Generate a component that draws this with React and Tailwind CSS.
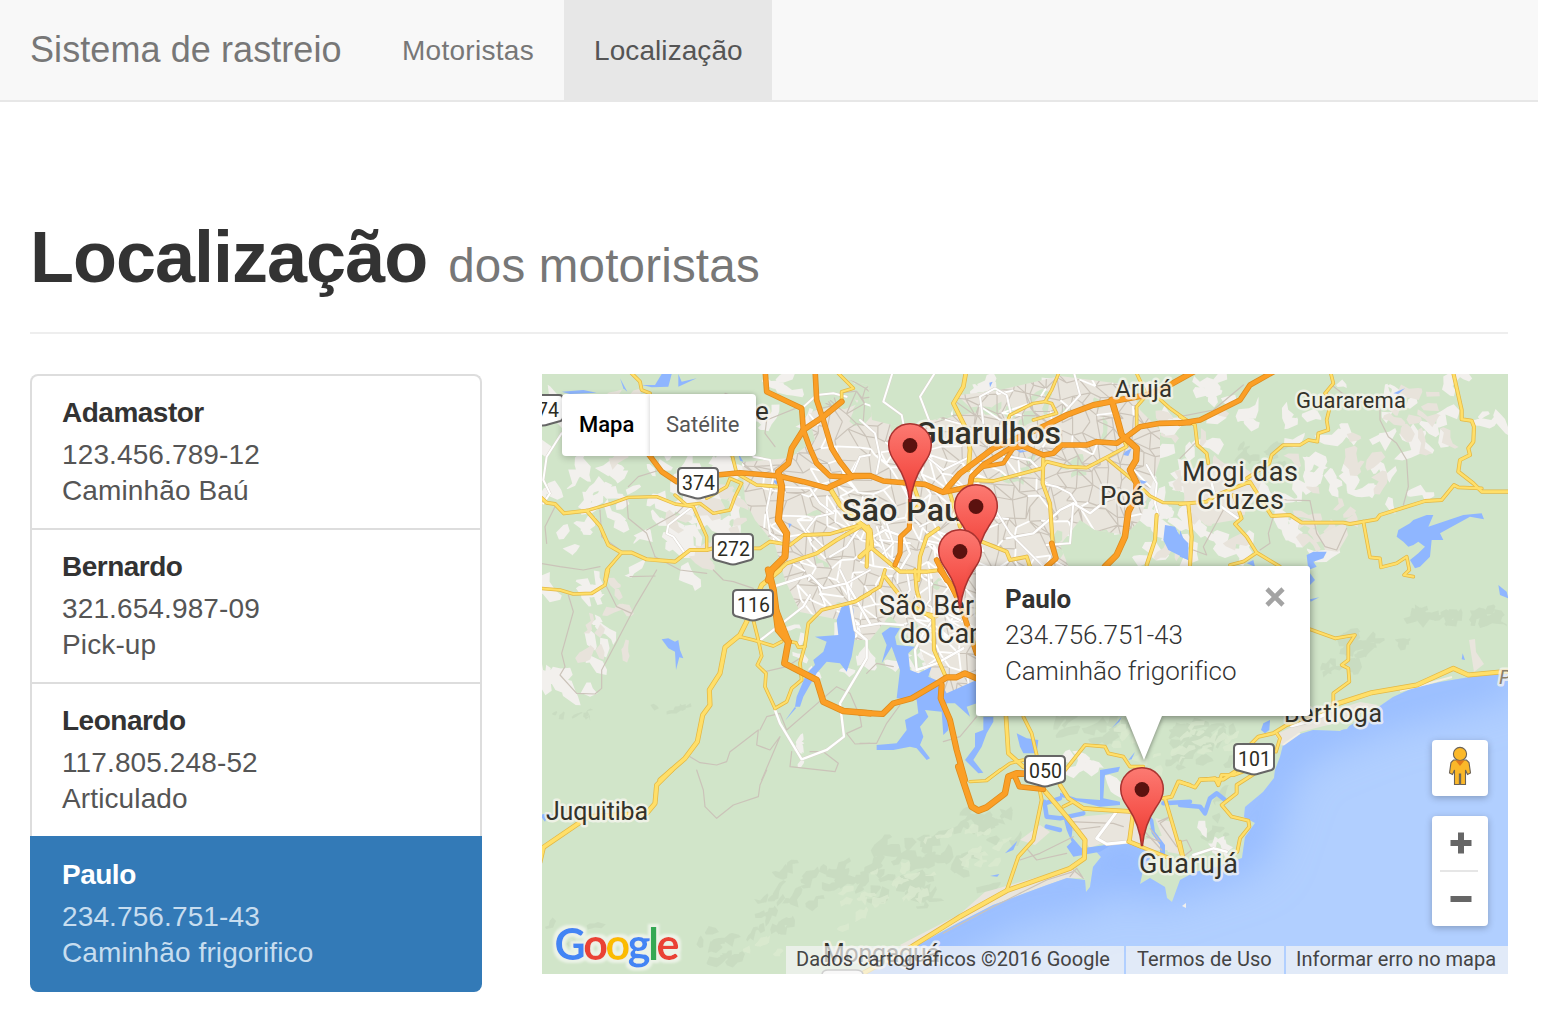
import React from "react";

const drivers = [
  { name: "Adamastor", doc: "123.456.789-12", vehicle: "Caminhão Baú" },
  { name: "Bernardo", doc: "321.654.987-09", vehicle: "Pick-up" },
  { name: "Leonardo", doc: "117.805.248-52", vehicle: "Articulado" },
  { name: "Paulo", doc: "234.756.751-43", vehicle: "Caminhão frigorifico", active: true },
];

/* Map data: each sector has its own origin and is drawn at one third scale. */
const origin = {
  nw: [540, 370], n: [860, 370], ne: [1180, 370],
  w: [540, 570], c: [860, 570], e: [1180, 570],
  sw: [540, 770], s: [860, 770], se: [1180, 770],
};

const orange = [
  ["nw", 4, "675,-5 680,65 785,115 790,180 810,235 830,280 870,318 935,322"],
  ["nw", 4, "825,-5 830,90 850,150 875,235 900,275 935,320 990,318"],
  ["nw", 4.5, "905,95 850,140 790,180 755,235 745,280 715,305"],
  ["nw", 4, "320,245 365,305 410,335"],
  ["nw", 4, "530,315 600,308 715,318 790,335 865,355"],
  ["nw", 4.5, "870,350 935,320"],
  ["nw", 5.5, "715,310 725,350 715,450 740,490 735,560 695,600 685,630"],
  ["n", 4, "-20,317 30,317 70,333 150,340 195,343 250,367 330,350"],
  ["n", 4.5, "255,362 300,310 400,235 470,205 560,165 620,135 700,105 790,88 860,75 920,50 1010,0"],
  ["n", 4, "330,350 335,320 370,285 450,235 480,230"],
  ["n", 3, "355,300 370,290 430,280 460,235"],
  ["n", 4, "480,225 550,255 580,250 605,225 680,225 710,215 770,220 800,200 840,170 900,160 990,158"],
  ["n", 5, "755,90 770,140 785,195 830,235 828,270 810,300 830,340 828,380 805,425 795,500 770,555 735,590"],
  ["n", 3.5, "150,430 148,475 122,500 120,550 105,585"],
  ["n", 4, "575,520 588,565 560,590"],
  ["n", 4, "230,570 260,630"],
  ["ne", 4, "0,160 60,150 180,90 210,45 290,0"],
  ["w", 5.5, "685,0 700,60 715,180 745,215"],
  ["w", 5, "700,100 745,215 733,280 830,330 850,395 910,423 990,430"],
  ["c", 4.5, "0,428 68,432 100,400 155,385 240,335 260,322 290,322 315,310 350,325"],
  ["c", 4.5, "245,345 242,385 270,450 290,540 315,630"],
  ["c", 4, "240,0 270,40 300,100 350,250"],
  ["s", 5, "295,-10 335,110 355,122 380,112 435,70 445,20 470,10 515,12"],
  ["s", 4, "465,20 478,50 550,58"],
];

const yellow = [
  ["nw", 3, "0,380 20,398 45,402 72,430 140,422 180,468 205,525 245,548 275,548 320,568 405,575 450,540 500,540 520,535"],
  ["nw", 2.3, "140,422 215,400 265,382 350,380 405,402 460,410 500,500 500,540"],
  ["nw", 2.7, "640,535 660,535 690,515 750,525 790,495 870,492 960,465"],
  ["nw", 2.7, "265,0 300,35 305,60 330,70"],
  ["nw", 2.3, "405,375 440,405 480,400 520,430 570,420 585,380 605,340 570,325 560,350 500,385"],
  ["nw", 2.5, "575,250 590,310 650,345 715,350"],
  ["nw", 4, "870,355 900,405 960,460 990,490"],
  ["nw", 3, "960,470 890,510 830,550 740,580 700,615"],
  ["nw", 2.5, "245,548 200,600 195,630"],
  ["nw", 2.5, "885,0 940,55 905,65 905,95"],
  ["nw", 3, "985,470 980,590"],
  ["n", 3.5, "320,-5 310,50 280,100 320,180 330,240 325,300"],
  ["n", 2.3, "600,0 575,60 555,95 575,100 590,130 555,140 520,150"],
  ["n", 2.3, "555,95 520,100 450,135 440,160"],
  ["n", 2.7, "330,330 400,333 470,315 545,295 560,275 620,290 680,293 740,262 800,230 785,195"],
  ["n", 3, "550,265 548,340 570,400 578,520"],
  ["n", 2.3, "740,265 830,340 870,378 910,398 990,400"],
  ["n", 3, "890,435 885,510 860,585"],
  ["n", 3, "365,515 440,545 450,570 500,560 510,590"],
  ["n", 2.5, "830,170 830,110 860,75 830,10"],
  ["n", 2.5, "880,70 930,115 990,158"],
  ["n", 3, "160,345 180,400 165,420"],
  ["n", 4, "0,460 30,480 35,530 0,560"],
  ["n", 3, "235,475 200,500 180,560 175,630"],
  ["n", 3, "30,530 90,580 120,605 200,605 240,600"],
  ["n", 3, "270,370 300,470"],
  ["ne", 2.6, "450,0 460,40 435,70 455,90 440,150 445,180 415,190 412,215 385,210 360,225 310,225 275,255 268,280 200,325"],
  ["ne", 3, "818,0 845,120 845,148 875,152 882,170 880,215 865,235 870,255 840,270 835,305 880,340 905,365 990,365"],
  ["ne", 2.8, "905,355 835,352 822,345 785,390 735,393 600,435 590,448 510,462 490,458 365,458 330,435 275,438 235,375 210,335 110,375 80,395 0,402"],
  ["ne", 2.6, "550,455 570,562 600,565 603,592 650,580 680,560 688,600 672,615 700,620"],
  ["ne", 2.6, "0,140 45,165 52,225 80,250 85,280"],
  ["ne", 3, "25,402 35,500 30,585"],
  ["ne", 2.6, "160,375 185,445 165,462 200,500 230,548 300,590"],
  ["ne", 2.6, "230,548 190,575 150,585"],
  ["w", 2.6, "0,55 60,60 100,72 155,70 195,45 205,0"],
  ["w", 4, "720,0 665,45 620,155 600,195 555,232 540,310 508,360 510,405 488,435 472,515 435,565 360,630"],
  ["w", 2.5, "640,150 655,210 665,258 652,285 678,310 675,350 705,415"],
  ["w", 2.5, "600,200 640,210 700,228 725,215"],
  ["w", 2.6, "705,415 740,395 755,355 785,330 780,280 795,225 805,160 845,120 945,95 990,70"],
  ["w", 2.4, "752,215 768,218 775,232 795,230"],
  ["c", 3, "75,20 130,90 220,145 222,240 255,315"],
  ["c", 2.6, "0,85 60,50 75,0"],
  ["c", 3, "165,0 170,60 190,130 230,138"],
  ["c", 3.5, "438,440 445,550 490,590"],
  ["c", 2.6, "490,440 515,490 530,555"],
  ["c", 2.6, "600,620 675,525 735,530 745,550 790,560 810,590 850,590"],
  ["c", 2.3, "490,570 450,580 380,630"],
  ["e", 2.6, "390,178 465,205 525,195 505,225 505,270 485,285 505,295 508,335 460,370 460,405"],
  ["e", 4, "460,405 575,368 710,345 820,295 865,315 990,303"],
  ["e", 3, "460,410 320,465 280,490 235,500 205,530"],
  ["e", 2.6, "290,490 300,505 288,545"],
  ["e", 3.2, "165,605 130,628 60,628"],
  ["sw", 4, "395,0 350,45 345,100 320,130 145,140 10,232 0,275"],
  ["s", 4, "550,58 620,140 675,210 673,265 630,295 440,362 300,440 155,530 0,615"],
  ["s", 3.5, "600,45 625,85 670,115 740,120 820,125 808,215 845,230"],
  ["s", 2.8, "540,65 545,90 520,210 475,260 440,362"],
  ["s", 2.5, "640,95 610,110"],
  ["s", 3, "910,85 935,80 955,35 990,45"],
  ["s", 2.8, "915,85 965,255"],
  ["s", 3, "805,215 930,265"],
  ["s", 2.3, "330,35 380,32 420,0"],
  ["se", 3, "0,35 45,52 60,30 105,25 115,45 125,15 160,15 200,0"],
  ["se", 2.8, "225,10 170,45 170,70 125,105 155,140 205,152 208,170 180,205 172,245"],
  ["se", 2.5, "0,215 10,260"],
];

const white = [
  ["nw", 2, "65,190 20,260 10,330 30,370 10,400"],
  ["nw", 2, "470,400 385,465 380,490 400,500 435,550"],
  ["nw", 2, "640,260 690,270 700,320 680,420 690,490 730,520"],
  ["nw", 2, "780,120 830,75 880,70 920,80"],
  ["nw", 2, "720,350 810,355 840,400 880,430 830,440 800,480 850,530"],
  ["nw", 2, "930,330 960,260 990,255"],
  ["nw", 2, "870,560 920,530 960,470"],
  ["n", 2, "100,0 70,95 125,135 130,160"],
  ["n", 2, "230,0 180,80 205,145 220,180"],
  ["n", 2, "370,160 360,80 405,55 440,75 455,140"],
  ["n", 2, "640,0 660,75 610,130"],
  ["n", 2, "450,260 510,270 540,300"],
  ["n", 2, "860,285 890,340 885,400 895,435"],
  ["n", 2.4, "440,505 520,490 590,430 600,420 640,400 690,430 760,375"],
  ["n", 2, "640,400 630,520 560,525"],
  ["n", 2, "545,340 590,350 630,370 650,400"],
  ["n", 2, "0,150 45,190 60,260 50,310"],
  ["n", 2, "200,260 250,300 320,265"],
  ["n", 2, "400,410 450,490 560,600"],
  ["n", 2.4, "40,500 75,480 130,500 150,550 120,600"],
  ["n", 2, "50,470 90,590"],
  ["n", 2, "80,460 100,520 60,560"],
  ["n", 2, "60,510 150,520"],
  ["n", 2, "180,470 240,440"],
  ["ne", 2.5, "95,340 110,400 180,450"],
  ["c", 2.4, "0,170 60,160 130,165"],
  ["c", 2.4, "170,300 165,240 190,190 240,120 300,150"],
  ["c", 2.4, "170,300 230,280 310,235"],
  ["c", 2, "205,0 210,90 180,130"],
  ["c", 2, "140,0 150,60 110,110"],
  ["w", 2.2, "810,75 790,110 655,215"],
  ["w", 2.4, "700,50 810,15 850,55 920,40 990,160"],
  ["w", 2.4, "920,40 945,180 980,210 980,265 900,400 912,500 860,540 785,568 720,460 705,420"],
  ["w", 2, "900,0 920,40 990,0"],
  ["s", 3, "770,125 710,205 740,222 808,215"],
  ["se", 2.5, "40,255 100,235 140,245"],
  ["e", 4, "335,466 380,455 430,435"],
];

const gray = [
  ["w", "85,75 100,125 65,250 75,290 60,315 110,370 165,372 185,355 185,300 230,215 285,110 350,0"],
  ["w", "200,50 230,110 275,130"],
  ["w", "270,20 345,18"],
  ["w", "520,0 550,30 580,35 640,55"],
  ["w", "450,560 480,578 530,585 560,575 570,545 590,530 655,480 650,525 690,540 720,500 665,630"],
  ["w", "660,480 680,440 720,430 740,480 890,350 930,370 960,440 965,470 920,490 945,522 990,520"],
  ["w", "810,545 850,545 895,580 885,605 750,590 755,545"],
  ["w", "675,305 740,290 780,265"],
  ["sw", "470,0 490,60 495,110 530,145 580,105 655,80 660,45 680,0"],
  ["ne", "455,45 500,80 600,115 600,150 625,200 650,220 680,270 685,350 670,405"],
  ["ne", "270,380 320,390 390,392 410,490 435,530 470,540 500,475"],
  ["ne", "0,140 100,120 190,45"],
  ["ne", "280,440 265,490 270,520 240,540"],
  ["ne", "130,420 70,530 80,555 40,540"],
  ["ne", "0,265 45,220"],
  ["nw", "45,410 15,470 20,520"],
  ["nw", "260,385 265,445 320,490 345,560"],
  ["nw", "265,350 295,320 360,300"],
  ["nw", "320,480 410,430 430,410"],
  ["nw", "0,580 60,590 130,600 180,590"],
  ["nw", "180,420 185,500 240,540"],
  ["nw", "680,150 675,190 705,230"],
  ["nw", "555,70 610,90 680,150 780,110"],
  ["nw", "345,560 420,600 500,610"],
  ["c", "0,520 50,520 80,460 120,405"],
  ["c", "350,440 300,500 250,515"],
  ["c", "20,310 50,280 100,290"],
  ["s", "480,270 540,250 640,200"],
  ["s", "500,235 530,270 620,250"],
  ["s", "480,370 560,330 640,305"],
  ["s", "250,490 400,410 480,370"],
  ["s", "625,155 760,160 790,170"],
  ["s", "640,180 720,170"],
  ["s", "630,320 650,295 670,325 640,300"],
  ["s", "850,180 905,240"],
  ["s", "870,175 900,215 860,200"],
  ["s", "895,155 930,140 900,160 950,230"],
  ["se", "0,215 20,210 35,240 10,260"],
];

const lakes = [
  ["w", "905,110 925,105 940,115 945,200 935,260 920,305 900,280 860,275 830,310 790,380 780,410 765,410 770,380 800,310 825,285 820,270 850,245 860,215 825,200 895,195 890,150"],
  ["w", "365,208 385,205 405,215 415,210 420,240 430,265 418,262 408,300 405,245 385,235"],
  ["w", "735,452 765,410 768,415"],
  ["c", "65,190 90,172 120,175 105,200 110,225 165,230 145,250 150,300 175,310 215,290 205,320 240,335 260,370 350,330 350,400 320,410 330,440 285,400 260,400 265,480 250,495 245,425 195,420 205,440 180,470 190,500 180,525 210,565 200,570 170,535 150,530 100,540 50,540 50,525 110,520 140,480 135,450 175,430 170,390 110,385 120,300 95,230 65,280 80,225"],
  ["c", "370,440 400,440 400,455 380,490 365,530 340,570 370,608 355,610 315,570 345,530 345,490 370,480"],
  ["c", "470,490 500,505 535,510 530,550 490,550 480,530"],
  ["c", "755,475 785,440 778,455"],
  ["c", "720,600 780,590 775,605 735,615 725,640"],
  ["c", "805,570 825,545 815,568"],
  ["ne", "690,460 700,450 740,435 760,435 745,470 850,435 905,430 912,448 870,440 780,490 790,510 755,510 750,560 720,590 705,595 690,570 715,550 735,530 715,515 700,525 685,530 670,515 650,500 655,480"],
  ["ne", "380,555 400,545 440,545 430,565 400,575 410,590 385,600"],
  ["ne", "0,480 20,530 25,570 0,560"],
  ["ne", "200,580 220,570 225,590"],
  ["ne", "640,70 675,55 655,72"],
  ["n", "915,465 945,470 955,490 985,520 985,570 925,540 910,510"],
  ["n", "795,245 815,235 805,258 790,255"],
  ["n", "840,330 862,335 845,345"],
  ["n", "388,38 398,35 390,52"],
  ["n", "470,240 505,243 480,248"],
  ["nw", "305,45 345,45 365,12 395,12 385,50 335,52"],
  ["nw", "415,12 425,35 470,25 415,50"],
  ["nw", "65,65 130,60 170,68 90,72"],
  ["nw", "240,25 262,65 250,55"],
  ["nw", "595,250 610,275 600,272"],
  ["nw", "695,330 715,332 710,345"],
  ["nw", "745,460 755,462 748,475"],
  ["e", "390,10 405,30 390,45"],
  ["e", "250,460 270,450 268,480 255,490 243,480"],
  ["e", "955,45 980,65 985,85 960,75"],
  ["e", "848,250 855,270 845,268"],
  ["e", "390,88 418,82 392,95"],
  ["s", "435,250 472,212 460,240"],
  ["s", "390,318 418,312 412,320"],
  ["s", "610,140 640,155 635,200 665,235 760,222 720,245 640,260 620,230 635,215 620,180"],
  ["s", "720,0 735,0 730,85 780,95 780,105 720,110 600,80 600,68 650,85 720,90"],
  ["s", "865,130 880,150 885,185 915,225 915,260 900,260 900,225 875,190"],
  ["sw", "0,135 20,130 40,135 20,145 15,155"],
];

const inlets = [
  ["s", "553,95 560,140 600,145 670,130"],
  ["s", "555,100 600,85"],
  ["s", "910,100 990,95"],
  ["s", "560,170 600,180"],
  ["se", "0,105 60,110 75,130 90,85 110,70 135,90"],
];

const labels = [
  { t: "Guarulhos", x: 915, y: 444, s: 32, w: 146, b: 500 },
  { t: "São Paulo", x: 842, y: 521, s: 32, w: 147, b: 500 },
  { t: "São Bernardo", x: 879, y: 615, s: 27, w: 166 },
  { t: "do Campo", x: 900, y: 643, s: 27, w: 123 },
  { t: "Mogi das", x: 1182, y: 481, s: 27, w: 116 },
  { t: "Cruzes", x: 1197, y: 509, s: 27, w: 87 },
  { t: "Poá", x: 1100, y: 505, s: 26, w: 45 },
  { t: "Arujá", x: 1115, y: 397, s: 24, w: 57 },
  { t: "Guararema", x: 1296, y: 408, s: 22, w: 110 },
  { t: "Bertioga", x: 1284, y: 722, s: 25, w: 98 },
  { t: "Guarujá", x: 1139, y: 873, s: 27, w: 99 },
  { t: "Juquitiba", x: 546, y: 820, s: 25, w: 102 },
  { t: "Mongaguá", x: 823, y: 962, s: 25, w: 117 },
  { t: "e", x: 755, y: 420, s: 26, w: 14 },
];

const shields = [
  ["74", 522, 394], ["374", 677, 467], ["272", 712, 533], ["116", 732, 589],
  ["050", 1024, 755], ["101", 1233, 743],
];

const pins = [[910, 423], [976, 484], [960, 529], [1142, 767]];

const seaPath =
  "M1508,673 1470,677 1440,682 1413,688 1393,697 1377,708 1360,720 1340,731 1313,730 1297,735 1283,745 1280,757 1275,770 1274,778 1263,792 1245,807 1244,817 1255,823 1245,837 1242,858 1220,866 1195,872 1180,880 1172,902 1167,898 1165,887 1150,878 1140,884 1143,870 1150,858 1143,847 1127,842 1107,845 1093,848 1101,857 1093,867 1090,887 1086,892 1085,880 1067,878 1047,885 1020,895 993,905 960,922 927,940 903,952 862,975 1508,975Z";

const urbanPath =
  "M742,462 L790,458 815,440 808,415 838,395 850,380 868,385 872,420 905,428 950,415 960,395 1000,390 1060,376 1130,385 1140,410 1160,430 1160,460 1150,490 1140,520 1125,535 1095,530 1080,520 1060,545 1070,570 1000,600 985,640 978,690 940,700 920,650 890,615 870,640 855,640 840,620 800,612 785,580 775,545 755,520 745,500Z";

function rng(seed) {
  let a = seed;
  return () => {
    a = (a * 1664525 + 1013904223) % 4294967296;
    return a / 4294967296;
  };
}

/* Irregular street mesh on a jittered grid. */
function streetMesh() {
  const r = rng(41);
  const step = 13;
  const cols = 36;
  const rows = 28;
  const pts = [];
  for (let j = 0; j <= rows; j++) {
    const line = [];
    for (let i = 0; i <= cols; i++) {
      line.push([735 + i * step + (r() - 0.5) * 14, 370 + j * step + (r() - 0.5) * 14]);
    }
    pts.push(line);
  }
  let grayD = "";
  let whiteD = "";
  const seg = (a, b) => `M${a[0].toFixed(1)},${a[1].toFixed(1)}L${b[0].toFixed(1)},${b[1].toFixed(1)}`;
  for (let j = 0; j < rows; j++) {
    for (let i = 0; i < cols; i++) {
      const p = pts[j][i];
      const core = Math.hypot(p[0] - 890, (p[1] - 550) * 0.9) < 110;
      [pts[j][i + 1], pts[j + 1][i], pts[j + 1][i + 1]].forEach((q, k) => {
        const v = r();
        if (v < (core ? 0.36 : 0.08)) whiteD += seg(p, q);
        else if (v < (k === 2 ? 0.42 : 0.85)) grayD += seg(p, q);
      });
    }
  }
  return [grayD, whiteD];
}

/* Angular patches of open land or relief, grown as short ragged chains inside boxes. */
function patches(boxes, seed, slope) {
  const r = rng(seed);
  let d = "";
  boxes.forEach(([x, y, w, h, n, size]) => {
    for (let k = 0; k < n; k++) {
      let px = x + r() * w;
      let py = y + r() * h;
      const steps = 2 + Math.floor(r() * 3);
      const dir = slope ? -0.5 + (r() - 0.5) * 0.6 : r() * Math.PI * 2;
      const upper = [];
      const lower = [];
      for (let i = 0; i <= steps; i++) {
        const half = size * (i === 0 || i === steps ? 0.1 + r() * 0.3 : 0.25 + r() * 0.6);
        upper.push([px - Math.sin(dir) * half + (r() - 0.5) * 3, py + Math.cos(dir) * half + (r() - 0.5) * 3]);
        lower.unshift([px + Math.sin(dir) * half * (0.3 + r() * 0.7), py - Math.cos(dir) * half * (0.3 + r() * 0.7)]);
        const turn = dir + (r() - 0.5) * 1.4;
        px += Math.cos(turn) * size * (0.4 + r() * 0.5);
        py += Math.sin(turn) * size * (0.4 + r() * 0.5);
      }
      d += "M" + upper.concat(lower).map((p) => `${p[0].toFixed(1)},${p[1].toFixed(1)}`).join("L") + "Z";
    }
  });
  return d;
}

const [meshGray, meshWhite] = streetMesh();
const lightLand = patches([
  [545, 400, 210, 75, 26, 12], [545, 460, 190, 110, 36, 12], [545, 570, 70, 115, 18, 12],
  [655, 470, 90, 90, 22, 12], [700, 376, 120, 70, 8, 10], [960, 376, 110, 40, 8, 10],
  [1125, 380, 70, 180, 28, 12], [1190, 376, 150, 60, 14, 11], [1300, 420, 110, 70, 12, 12], [1380, 376, 115, 60, 14, 11],
  [1190, 490, 130, 65, 24, 12], [1330, 470, 90, 30, 8, 12], [1060, 500, 100, 60, 10, 11], [850, 640, 80, 50, 12, 10],
  [780, 620, 60, 60, 5, 9], [790, 735, 15, 35, 4, 7], [1060, 740, 50, 40, 6, 10], [1205, 825, 25, 20, 4, 7],
], 7, false);
const tanLand = patches([
  [580, 390, 170, 80, 12, 9], [590, 560, 45, 110, 9, 9], [680, 480, 70, 80, 14, 10],
  [1170, 400, 60, 150, 16, 10], [1290, 420, 110, 120, 12, 10], [1390, 376, 60, 60, 10, 10],
  [1315, 520, 30, 20, 5, 9],
], 19, false);
const greenLand = patches([
  [860, 376, 90, 40, 18, 15], [960, 400, 180, 90, 14, 9], [1050, 530, 70, 40, 9, 10],
  [790, 500, 180, 120, 8, 7], [840, 376, 80, 20, 10, 16],
], 23, false);
const relief = patches([
  [690, 930, 60, 35, 10, 8], [735, 895, 50, 40, 12, 8], [770, 870, 60, 35, 12, 9], [820, 860, 60, 40, 13, 9],
  [860, 850, 70, 60, 18, 10], [900, 830, 80, 60, 18, 10], [950, 805, 60, 40, 14, 9],
  [1050, 724, 80, 20, 12, 9], [1160, 724, 80, 45, 22, 9], [1315, 640, 45, 35, 14, 8],
  [1340, 630, 60, 20, 14, 8], [1400, 612, 95, 14, 18, 9], [545, 714, 50, 6, 5, 5],
  [640, 705, 45, 8, 5, 5], [545, 925, 60, 40, 6, 6], [1200, 795, 25, 45, 7, 7], [1225, 445, 50, 20, 10, 7],
], 31, true);
const reliefLight = patches([
  [850, 870, 80, 40, 12, 7], [920, 830, 90, 40, 12, 7], [1100, 728, 110, 45, 18, 7],
  [830, 890, 30, 40, 6, 7], [740, 940, 40, 25, 4, 6], [1190, 740, 35, 25, 6, 7],
], 53, true);

function Lines({ data, color, extra = 0, width }) {
  return (
    <g fill="none" stroke={color} strokeLinejoin="round" strokeLinecap="round">
      {data.map((row, i) => {
        const [s, a, b] = row;
        const pts = b || a;
        const w = (b ? a : width) + extra;
        return (
          <polyline
            key={i}
            points={pts}
            transform={`translate(${origin[s][0]} ${origin[s][1]}) scale(.33333)`}
            strokeWidth={w * 3}
          />
        );
      })}
    </g>
  );
}

function Pin({ x, y }) {
  return (
    <g transform={`translate(${x} ${y})`}>
      <path
        d="M0,.7C-12.2,.7 -21.3,10.2 -21.3,22C-21.3,29.5 -17.8,34.8 -13.6,41C-8,49.3 -2.2,60 -.5,78.500H.5C2.2,60 8,49.3 13.6,41C17.8,34.8 21.3,29.5 21.3,22C21.3,10.2 12.2,.7 0,.7Z"
        fill="url(#pinFill)"
        stroke="#a93330"
        strokeWidth="1.5"
      />
      <circle cy="22.500" r="7.4" fill="#5b120f" />
    </g>
  );
}

function MapDrawing() {
  return (
    <svg className="block h-[600px] w-[966px]" viewBox="542 374 966 600" fontFamily="Roboto, sans-serif">
      <defs>
        <linearGradient id="pinFill" x1="0" y1="0" x2="0" y2="1">
          <stop offset="0" stopColor="#fc7a72" />
          <stop offset=".55" stopColor="#f6564e" />
          <stop offset="1" stopColor="#e83a30" />
        </linearGradient>
        <clipPath id="urban"><path d={urbanPath} /></clipPath>
        <clipPath id="sea"><path d={seaPath} /></clipPath>
        <filter id="depth" x="-20%" y="-20%" width="140%" height="140%"><feGaussianBlur stdDeviation="24" /></filter>
        <filter id="halo" x="-10%" y="-20%" width="120%" height="140%">
          <feMorphology in="SourceAlpha" operator="dilate" radius="3" result="grown" />
          <feGaussianBlur in="grown" stdDeviation=".8" result="soft" />
          <feFlood floodColor="#f2f6ee" floodOpacity=".8" />
          <feComposite in2="soft" operator="in" />
          <feMerge>
            <feMergeNode />
            <feMergeNode in="SourceGraphic" />
          </feMerge>
        </filter>
      </defs>
      <rect x="542" y="374" width="966" height="600" fill="#d1e5c9" />
      <path d={relief} fill="#c7dabf" opacity=".8" />
      <path d={reliefLight} fill="#dbead0" opacity=".8" />
      <path d={lightLand} fill="#f2f0ed" />
      <path d={tanLand} fill="#e8e3db" />
      <path d={urbanPath} fill="#e9e5dd" />
      <g fill="#e9e5dd">
        <path d="M1182,470L1240,465 1262,480 1255,500 1235,520 1205,525 1185,505Z" />
        <path d="M1067,818L1130,812 1143,840 1165,835 1175,850 1140,850 1105,842 1090,848Z" />
        <path d="M985,892L1010,885 1070,868 1085,878 1067,878 1020,895 960,922 905,950 900,945 960,914Z" />
        <path d="M1155,818L1172,822 1185,855 1168,852Z" />
        <path d="M1275,735L1310,718 1360,702 1378,705 1340,722 1300,732 1282,746Z" />
        <path d="M1020,840L1040,825 1050,832 1035,845Z" />
        <path d="M1320,535L1345,522 1348,535 1338,552 1325,550Z" />
        <path d="M1469,640L1475,639 1476,652 1484,664 1474,672Z" />
      </g>
      <g clipPath="url(#urban)">
        <path d={greenLand} fill="#d1e5c9" />
        <path d={meshGray} fill="none" stroke="#cbc4ba" strokeWidth="1.2" />
        <path d={meshWhite} fill="none" stroke="#fff" strokeWidth="1.8" />
      </g>
      <path d={seaPath} fill="#b1cfff" />
      <g clipPath="url(#sea)">
        <path
          d="M850,985L1020,895 1085,885 1120,842 1150,880 1245,850 1280,745 1377,705 1520,668"
          fill="none" stroke="#8ab2fe" strokeWidth="34" filter="url(#depth)"
        />
      </g>
      <g fill="#8fb6ff">
        {lakes.map(([s, p], i) => (
          <polygon key={i} points={p} transform={`translate(${origin[s][0]} ${origin[s][1]}) scale(.33333)`} />
        ))}
      </g>
      <Lines data={inlets} color="#8fb6ff" width={4.5} />
      <path d="M1339,730L1343,725 1352,722 1347,729Z" fill="#d1e5c9" />
      <path d="M1400,691L1452,677M1300,733L1283,745" stroke="#f4efe2" strokeWidth="2" fill="none" />
      <path d="M1182,906L1186,903V908Z" fill="#f2f0ed" />
      <Lines data={gray} color="#cbc3b9" width={1.2} />
      <Lines data={white} color="#d8d2ca" extra={0.8} />
      <Lines data={white} color="#ffffff" />
      <Lines data={yellow} color="#e4b844" extra={1.1} />
      <Lines data={yellow} color="#ffdf69" extra={-0.4} />
      <Lines data={orange} color="#de8b1c" extra={1.6} />
      <Lines data={orange} color="#fb9f26" />

      {shields.map(([t, x, y]) => (
        <g key={t} transform={`translate(${x} ${y})`}>
          <path
            d="M5,1H37Q41,1 41,5V23.500Q41,26 38.500,27L26,30.500Q21,32.500 16,30.500L3.500,27Q1,26 1,23.500V5Q1,1 5,1Z"
            fill="#fff" stroke="#666" strokeWidth="2"
          />
          <text x={t.length === 2 ? 26 : 21.5} y="22.500" textAnchor="middle" fontSize="19.500" fill="#2b2b22">{t}</text>
        </g>
      ))}
      <g fill="#33322a" stroke="#f7f5ef" strokeOpacity=".75" strokeWidth="5" strokeLinejoin="round" paintOrder="stroke">
        {labels.map((l) => (
          <text key={l.t} x={l.x} y={l.y} fontSize={l.s} fontWeight={l.b || 400} textLength={l.w}>{l.t}</text>
        ))}
        <text x="1499" y="684" fontSize="20" fontStyle="italic" fill="#8b7f6b">P</text>
      </g>
      <path d="M822,974Q823,970 828,970H856Q862,970 863,974" fill="#fff" stroke="#777" strokeWidth="1.6" />
      <text
        x="554.500" y="960" fontFamily="Lato, sans-serif" fontSize="43" fontWeight="700" textLength="125" filter="url(#halo)"
      >
        <tspan fill="#4285f4">G</tspan><tspan fill="#ea4335">o</tspan><tspan fill="#fbbc05">o</tspan><tspan fill="#4285f4">g</tspan><tspan fill="#34a853">l</tspan><tspan fill="#ea4335">e</tspan>
      </text>
      {pins.map(([x, y]) => <Pin key={x} x={x} y={y} />)}
    </svg>
  );
}

function InfoWindow() {
  return (
    <div className="absolute left-[434px] top-[192px] h-[150px] w-[334px] rounded-[3px] bg-white pl-[29px] pt-[15px] font-[Roboto,sans-serif] text-[26px] leading-[36px] text-[#333] shadow-[0_2px_8px_rgba(0,0,0,0.45)]">
      <div className="font-bold tracking-[-0.1px]">Paulo</div>
      <div className="font-light tracking-[-0.05px]">234.756.751-43</div>
      <div className="font-light tracking-[-0.05px]">Caminhão frigorifico</div>
      <svg className="absolute right-[25px] top-[21px]" width="20" height="20" viewBox="0 0 20 20">
        <path d="M2,2L18,18M18,2L2,18" stroke="#a3a3a3" strokeWidth="4.6" />
      </svg>
      <div className="absolute left-[144px] top-[150px] h-[48px] w-[48px] overflow-hidden">
        <svg className="drop-shadow-[0_2px_2px_rgba(0,0,0,0.4)]" width="48" height="48" viewBox="0 0 48 48">
          <path d="M4.800,-3H43.200L24,44Z" fill="#fff" />
        </svg>
      </div>
    </div>
  );
}

function MapControls() {
  return (
    <>
      <div className="absolute left-[20px] top-[20px] flex h-[62px] rounded-[4px] bg-white font-[Roboto,sans-serif] text-[22px] leading-[61px] shadow-[0_2px_7px_rgba(0,0,0,0.22)]">
        <div className="w-[88px] pl-[17px] font-medium text-black">Mapa</div>
        <div className="w-[106px] rounded-r-[4px] pl-[16px] text-[#565656] shadow-[-1px_0_4px_rgba(0,0,0,0.15)]">Satélite</div>
      </div>
      <div className="absolute bottom-[48px] right-[20px] flex w-[56px] flex-col gap-[20px]">
        <div className="flex h-[56px] items-center justify-center rounded-[4px] bg-white shadow-[0_2px_7px_rgba(0,0,0,0.25)]">
          <svg width="24" height="40" viewBox="0 0 24 40" className="mt-[-4px]">
            <g fill="#fbb829" stroke="#6b6257" strokeWidth="1.1">
              <path d="M5.500,14H18.500L21,16.500L22.500,27L19.500,28.500L17.500,24V38.500H12.600V28H11.400V38.500H6.500V24L4.500,28.500L1.500,27L3,16.500Z" />
              <circle cx="12" cy="8" r="6.6" />
            </g>
            <path d="M7.500,14.500H16.500L12,20Z" fill="#e1791c" />
          </svg>
        </div>
        <div className="flex h-[110px] flex-col items-center rounded-[4px] bg-white shadow-[0_2px_7px_rgba(0,0,0,0.25)]">
          <div className="flex h-[54px] items-center"><svg width="22" height="22" viewBox="0 0 22 22" className="ml-[2px]"><path d="M11,.5V21.500M.5,11H21.500" stroke="#666" strokeWidth="6" /></svg></div>
          <div className="mr-[2px] h-[2px] w-[38px] bg-[#e6e6e6]" />
          <div className="flex h-[54px] items-center"><svg width="22" height="22" viewBox="0 0 22 22" className="ml-[2px]"><path d="M.5,11H21.500" stroke="#666" strokeWidth="6" /></svg></div>
        </div>
      </div>
      <div className="absolute bottom-0 right-0 flex h-[28px] gap-[2px] font-[Roboto,sans-serif] text-[20px] leading-[26px] text-[#444]">
        <div className="w-[338px] whitespace-nowrap bg-[#f5f5f5]/70 pl-[10px]">Dados cartográficos ©2016 Google</div>
        <div className="w-[158px] whitespace-nowrap bg-[#f5f5f5]/70 pl-[11px] tracking-[0.05px]">Termos de Uso</div>
        <div className="w-[222px] whitespace-nowrap bg-[#f5f5f5]/70 pl-[10px]">Informar erro no mapa</div>
      </div>
    </>
  );
}

export default function App() {
  return (
    <div className="h-[1028px] w-[1542px] overflow-hidden bg-white font-['Liberation_Sans',Arial,sans-serif] text-[#333]">
      <nav className="flex h-[102px] w-[1538px] border-b-2 border-[#e7e7e7] bg-[#f8f8f8] text-[28px] leading-[101px] text-[#777]">
        <div className="w-[372px] pl-[30px] text-[36px] leading-[100px] tracking-[0.08px]">Sistema de rastreio</div>
        <div className="w-[192px] pl-[30px] tracking-[0.28px]">Motoristas</div>
        <div className="h-[100px] w-[208px] bg-[#e7e7e7] pl-[30px] tracking-[0.08px] text-[#555]">Localização</div>
      </nav>
      <main className="w-[1538px] px-[30px] pt-[116px]">
        <h1 className="flex h-[116px] items-baseline gap-[21px] border-b-2 border-[#eee] text-[72px] font-bold leading-[79px] tracking-[-1px]">
          <span>Localização</span>
          <small className="text-[47.500px] font-normal tracking-[0.2px] text-[#777]">dos motoristas</small>
        </h1>
        <div className="mt-[40px] flex items-start gap-[60px]">
          <ul className="w-[452px] text-[28px] leading-[36px] tracking-[0.12px]">
            {drivers.map((d) => (
              <li
                key={d.name}
                className={
                  d.active
                    ? "h-[156px] rounded-b-[8px] bg-[#337ab7] px-[32px] pt-[21px] text-[#c7ddef]"
                    : "h-[154px] border-x-2 border-t-2 border-[#ddd] px-[30px] pt-[19px] text-[#555] first:rounded-t-[8px]"
                }
              >
                <h4 className={d.active ? "mb-[6px] font-bold tracking-[-0.5px] text-white" : "mb-[6px] font-bold tracking-[-0.5px] text-[#333]"}>{d.name}</h4>
                <p>{d.doc}</p>
                <p>{d.vehicle}</p>
              </li>
            ))}
          </ul>
          <section className="relative h-[600px] w-[966px] overflow-hidden">
            <MapDrawing />
            <InfoWindow />
            <MapControls />
          </section>
        </div>
      </main>
    </div>
  );
}
